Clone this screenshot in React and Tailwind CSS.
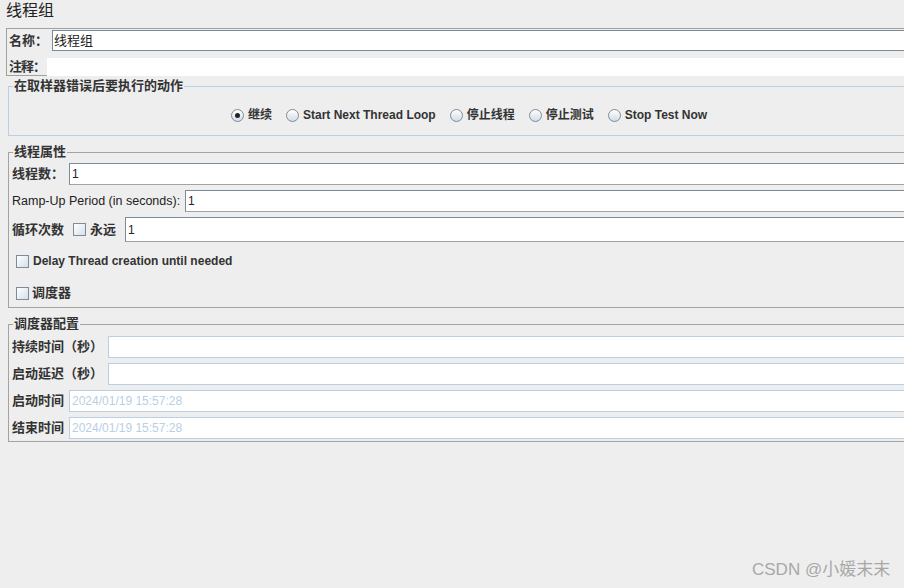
import React from 'react';

const font = { fontFamily: '"Liberation Sans", "Noto Sans CJK SC", sans-serif' };

const Radio = ({ checked, label }) => (
  <label className="flex items-center gap-[4px]">
    <span className="w-[13px] h-[13px] rounded-full border border-[#7d8c9b] bg-gradient-to-b from-white to-[#d3dce6] flex items-center justify-center">
      {checked && <span className="w-[5px] h-[5px] rounded-full bg-[#222]" />}
    </span>
    <span className="font-bold text-[12px] text-[#333] whitespace-nowrap">{label}</span>
  </label>
);

const Check = () => (
  <span className="inline-block shrink-0 w-[13px] h-[13px] border border-[#7d8c9b] bg-gradient-to-br from-white to-[#d6dfe9]" />
);

const Field = ({ value, blue, placeholder, h = 'h-[22px]' }) => (
  <div className={`flex-1 ${h} bg-white border border-r-0 ${blue ? 'border-[#b8cfe5]' : 'border-t-[#7a8a99] border-l-[#7a8a99] border-b-[#a3a3a3]'} flex items-center pl-[2px] text-[12px]`}>
    {placeholder ? <span className="text-[#b8cfe5]">{placeholder}</span> : <span className="text-[#222]">{value}</span>}
  </div>
);

const Box = ({ title, blue, className, children }) => (
  <fieldset className={`ml-[8px] border border-r-0 ${blue ? 'border-[#b8cfe5]' : 'border-[#a3a3a3]'} ${className}`}>
    <legend className="ml-[4px] px-[1px] text-[13px] leading-[16px] font-bold text-[#333]">{title}</legend>
    {children}
  </fieldset>
);

const Label = ({ w, children, className = '' }) => (
  <span className={`${w} shrink-0 whitespace-nowrap text-[13px] font-bold text-[#333] ${className}`}>{children}</span>
);

export default function App() {
  return (
    <div className="w-[904px] h-[588px] bg-[#eeeeee] overflow-hidden relative text-[#333]" style={font}>
      <div className="h-[28px] pl-[6px] pt-[1px] text-[16px] leading-[20px] text-[#222]">线程组</div>

      <div className="ml-[6px] h-[48px] border border-r-0 border-[#a0a0a0]">
        <div className="flex items-center pt-[1px]">
          <Label w="w-[45px]" className="pl-[2px]">名称：</Label>
          <div className="flex-1 h-[21px] bg-white border border-r-0 border-[#7a8a99] flex items-center pl-[1px] text-[13px] text-[#222]">线程组</div>
        </div>
        <div className="flex items-center mt-[6px]">
          <Label w="w-[40px]" className="pl-[2px] tracking-[-1px]">注释：</Label>
          <div className="flex-1 h-[18px] bg-white" />
        </div>
      </div>

      <Box title="在取样器错误后要执行的动作" blue className="mt-[2px] pt-[13px] pb-[12px]">
        <div className="h-[16px] flex items-center gap-[14px] pl-[222px]">
          <Radio checked label="继续" />
          <Radio label="Start Next Thread Loop" />
          <Radio label="停止线程" />
          <Radio label="停止测试" />
          <Radio label="Stop Test Now" />
        </div>
      </Box>

      <Box title="线程属性" className="mt-[8px] pt-[3px] pb-[2px]">
        <div className="flex items-center pl-[3px]">
          <Label w="w-[57px]">线程数：</Label>
          <Field value="1" />
        </div>
        <div className="flex items-center pl-[3px] mt-[5px]">
          <span className="w-[173px] shrink-0 whitespace-nowrap text-[12.5px] text-[#222]">Ramp-Up Period (in seconds):</span>
          <Field value="1" />
        </div>
        <div className="flex items-center pl-[3px] mt-[5px]">
          <Label w="w-[61px]">循环次数</Label>
          <Check />
          <Label w="w-[35px]" className="ml-[4px]">永远</Label>
          <Field value="1" h="h-[25px]" />
        </div>
        <div className="h-[24px] mt-[7px] flex items-center gap-[4px] pl-[7px]">
          <Check />
          <span className="text-[12px] font-bold text-[#333]">Delay Thread creation until needed</span>
        </div>
        <div className="h-[24px] mt-[8px] flex items-center gap-[3px] pl-[7px]">
          <Check />
          <Label w="">调度器</Label>
        </div>
      </Box>

      <Box title="调度器配置" className="mt-[8px] pt-[4px] pb-[2px]">
        <div className="flex items-center pl-[3px]">
          <Label w="w-[96px]">持续时间（秒）</Label>
          <Field blue />
        </div>
        <div className="flex items-center pl-[3px] mt-[5px]">
          <Label w="w-[96px]">启动延迟（秒）</Label>
          <Field blue />
        </div>
        <div className="flex items-center pl-[3px] mt-[5px]">
          <Label w="w-[57px]">启动时间</Label>
          <Field blue placeholder="2024/01/19 15:57:28" />
        </div>
        <div className="flex items-center pl-[3px] mt-[5px]">
          <Label w="w-[57px]">结束时间</Label>
          <Field blue placeholder="2024/01/19 15:57:28" />
        </div>
      </Box>

      <div className="absolute left-[752px] top-[559px] text-[17px] leading-[22px] text-[#a8a8a8]">CSDN @小媛末末</div>
    </div>
  );
}
